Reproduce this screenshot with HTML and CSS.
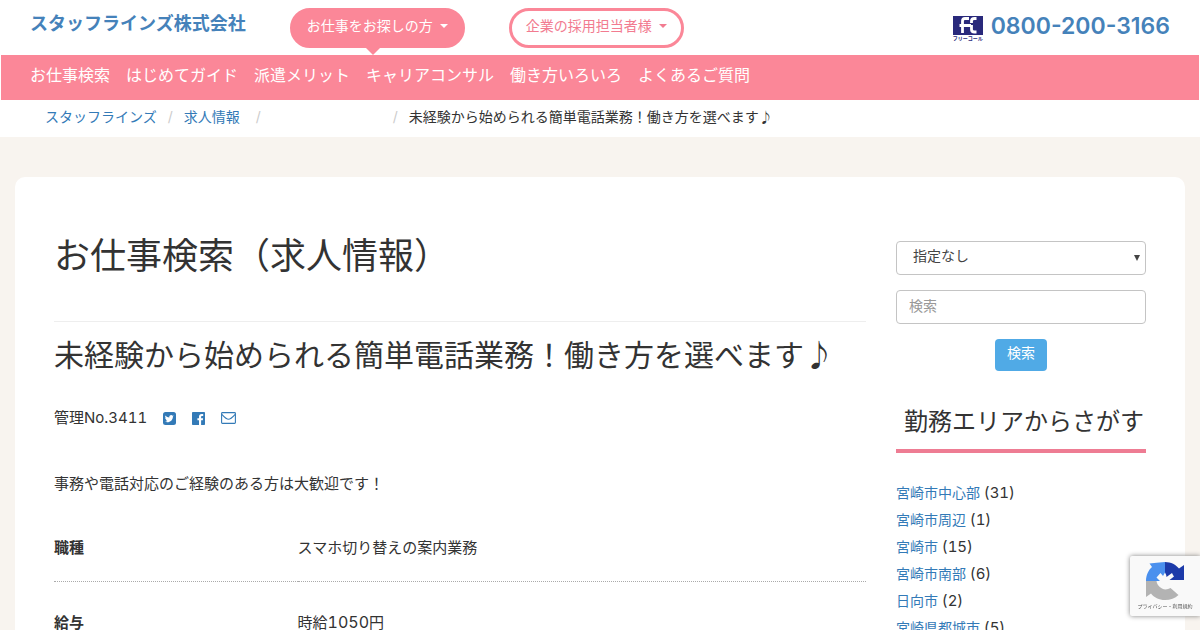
FILE: index.html
```html
<!DOCTYPE html>
<html lang="ja">
<head>
<meta charset="utf-8">
<meta name="viewport" content="width=device-width, initial-scale=1">
<title>お仕事検索（求人情報） | スタッフラインズ株式会社</title>
<link rel="stylesheet" href="styles.css">
</head>
<body>
<header class="site-header">
  <div class="top-bar">
    <a class="brand" href="#">スタッフラインズ株式会社</a>
    <div class="audience">
      <button class="pill pill-active" type="button">お仕事をお探しの方<span class="caret"></span></button>
      <button class="pill" type="button">企業の採用担当者様<span class="caret"></span></button>
    </div>
    <a class="phone" href="tel:0800-200-3166">
      <span class="freecall">
        <svg class="freecall-mark" viewBox="0 0 30 19" aria-hidden="true">
          <rect width="30" height="19" fill="#29297b"/>
          <path d="M16 2.500H12Q9.500 2.500 9.500 5V17M6.500 9.500H18M23.500 2.500H21.500Q18.500 2.500 18.500 5V7M18.500 9V13.500Q18.500 16 21.500 16H23.500" fill="none" stroke="#fff" stroke-width="2.800"/>
        </svg>
        <span class="freecall-text">フリーコール</span>
      </span>
      <span>0800-200-3166</span>
    </a>
  </div>
  <nav class="main-nav">
    <a href="#">お仕事検索</a>
    <a href="#">はじめてガイド</a>
    <a href="#">派遣メリット</a>
    <a href="#">キャリアコンサル</a>
    <a href="#">働き方いろいろ</a>
    <a href="#">よくあるご質問</a>
  </nav>
  <ol class="breadcrumb">
    <li><a href="#">スタッフラインズ</a></li>
    <li><a href="#">求人情報</a></li>
    <li class="crumb-blank"></li>
    <li>未経験から始められる簡単電話業務！働き方を選べます♪</li>
  </ol>
</header>

<div class="card">
  <main class="content">
    <h1>お仕事検索（求人情報）</h1>
    <h2>未経験から始められる簡単電話業務！働き方を選べます♪</h2>
    <div class="meta">
      <span>管理No.3411</span>
      <a href="#" aria-label="Twitter"><svg width="13" height="13" viewBox="0 0 13 13"><rect width="13" height="13" rx="2.500" fill="#337ab7"/><path d="M10.900 3.600l-1 .900c.1 3.400-2.600 5.800-5.500 5.800-.9 0-1.700-.2-2.400-.7 1 0 1.700-.2 2.400-.7-.8-.1-1.400-.6-1.600-1.300h.8c-.9-.3-1.400-.9-1.500-1.800l.8.200c-.8-.6-.9-1.600-.5-2.400 1 1.200 2.300 1.900 3.900 2-.3-1.500.7-2.500 1.900-2.500.6 0 1 .2 1.400.6l1.100-.5-.8 1.100z" fill="#fff"/></svg></a>
      <a href="#" aria-label="Facebook"><svg width="13" height="13" viewBox="0 0 13 13"><rect width="13" height="13" rx=".8" fill="#337ab7"/><path d="M7 13V8.200H5.400V6.300H7V4.800C7 3 8 2.100 9.700 2.100h1.500v1.800h-1c-.9 0-1.100.4-1.100 1.100v1.300h2l-.3 1.900H9.100V13z" fill="#fff"/></svg></a>
      <a href="#" aria-label="メール"><svg width="15" height="12" viewBox="0 0 15 12"><rect x=".6" y=".6" width="13.800" height="10.800" rx=".8" fill="none" stroke="#337ab7" stroke-width="1.100"/><path d="M.8 2.300C3 4.700 5.500 7.300 7.500 7.300S12 4.700 14.200 2.300" fill="none" stroke="#337ab7" stroke-width="1.100"/></svg></a>
    </div>
    <p class="lead">事務や電話対応のご経験のある方は大歓迎です！</p>
    <table class="details">
      <tr><th scope="row">職種</th><td>スマホ切り替えの案内業務</td></tr>
      <tr><th scope="row">給与</th><td>時給<span class="number">1050</span>円</td></tr>
    </table>
  </main>
  <aside class="sidebar">
    <form class="search">
      <div class="select-wrap">
        <select class="field" aria-label="カテゴリー"><option>指定なし</option></select>
      </div>
      <input class="field" type="text" placeholder="検索" aria-label="検索">
      <button class="submit" type="button">検索</button>
    </form>
    <h3>勤務エリアからさがす</h3>
    <ul class="areas">
      <li><a href="#">宮崎市中心部</a> <span>(31)</span></li>
      <li><a href="#">宮崎市周辺</a> <span>(1)</span></li>
      <li><a href="#">宮崎市</a> <span>(15)</span></li>
      <li><a href="#">宮崎市南部</a> <span>(6)</span></li>
      <li><a href="#">日向市</a> <span>(2)</span></li>
      <li><a href="#">宮崎県都城市</a> <span>(5)</span></li>
    </ul>
  </aside>
</div>

<div class="recaptcha">
  <svg width="38" height="38" viewBox="0 0 38 38" aria-hidden="true">
    <path d="M19 0v19H0C0 13 2.500 8 6 5L3.500 1.500Q10 .5 19 0z" fill="#4a90ee"/>
    <path d="M19 0c6 0 11 2.800 14 6.500L38 3v16H19z" fill="#1c3aa9"/>
    <path d="M0 19h19l13.500 14c-3.500 3.300-8 5-13.500 5-6 0-11-2.500-14-6.500L0 35z" fill="#b3b3b3"/>
    <path d="M19 10.500q1.500 2.500 1.500 4.500l5.500-4q1 2 2 3.500l-4.500 3.500H38V28L32 32.500 24.500 26Q20 28.500 16 26.500 11 24 10.500 19H14L10.500 15.500 14.500 11 17 14z" fill="#f9f9f9"/>
  </svg>
  <span class="recaptcha-text">プライバシー・利用規約</span>
</div>
</body>
</html>
```
FILE: styles.css
```css
* { box-sizing: border-box; }

body {
  margin: 0;
  background: #f8f4ef;
  color: #333;
  font: 15px/22px Inter, "Noto Sans CJK JP", sans-serif;
}

a { color: #337ab7; text-decoration: none; }
button, input, select { font: inherit; }

.site-header { background: #fff; }

.top-bar {
  display: flex;
  align-items: flex-start;
  height: 55px;
  padding: 8px 30px 0;
}
.brand {
  margin-right: 44px;
  color: #4582ba;
  font-size: 18px;
  line-height: 32px;
  font-weight: 700;
}
.audience { display: flex; gap: 44px; }
.pill {
  position: relative;
  display: flex;
  align-items: center;
  justify-content: center;
  gap: 7px;
  width: 175px;
  height: 40px;
  padding: 0 0 4px;
  border: 3px solid #fb8798;
  border-radius: 20px;
  background: #fff;
  color: #f27b90;
  font-size: 14px;
}
.pill-active { background: #fb8798; color: #fff; }
.pill-active::after {
  content: "";
  position: absolute;
  top: 37px;
  left: 73px;
  border: 7px solid transparent;
  border-top-color: #fb8798;
  border-bottom: 0;
}
.caret {
  border: 4px solid transparent;
  border-top-color: currentColor;
  border-bottom: 0;
}
.phone {
  display: flex;
  gap: 8px;
  margin-left: auto;
  color: #4582ba;
  font-size: 23px;
  line-height: 36px;
  font-weight: 600;
}
.freecall { width: 30px; padding-top: 8px; }
.freecall-mark { display: block; width: 30px; height: 19px; }
.freecall-text {
  display: block;
  color: #29297b;
  font-size: 5px;
  line-height: 6px;
  font-weight: 700;
  white-space: nowrap;
}

.main-nav {
  display: flex;
  gap: 16px;
  margin: 0 1px;
  padding: 0 29px 5px;
  background: #fb8798;
  font-size: 16px;
  line-height: 40px;
}
.main-nav a { color: #fff; }

.breadcrumb {
  display: flex;
  margin: 0;
  padding: 7px 45px 10px;
  list-style: none;
  font-size: 14px;
  line-height: 20px;
}
.breadcrumb li + li::before {
  content: "/";
  display: inline-block;
  width: 27px;
  color: #ccc;
  text-align: center;
}
.breadcrumb .crumb-blank { width: 142px; padding-left: 5px; }

.card {
  display: flex;
  gap: 30px;
  margin: 40px 15px;
  padding: 0 39px 40px;
  border-radius: 10px;
  background: #fff;
}
.content { flex: 1; min-width: 0; }

h1, h2, h3 { margin: 0; font-weight: 400; }
h1 {
  padding: 59px 0 45px;
  border-bottom: 1px solid #eee;
  font-size: 36px;
  line-height: 40px;
}
h2 { padding-top: 15px; font-size: 30px; line-height: 36px; }

.number { font-size: 16px; }
.meta, .number, .areas { font-variant-numeric: tabular-nums; }
.meta {
  display: flex;
  align-items: center;
  gap: 16px;
  padding-top: 34px;
}
.meta svg { display: block; }
.lead { margin: 44px 0 13px; }

.details { width: 100%; border-collapse: separate; border-spacing: 0; }
.details th, .details td {
  padding: 29px 0 22px;
  border-bottom: 1px dotted #aaa;
  text-align: left;
}
.details th { width: 30%; }

.sidebar { width: 250px; padding-top: 64px; }
.search { display: grid; gap: 15px; justify-items: center; }
.select-wrap { position: relative; width: 100%; }
.select-wrap::after {
  content: "";
  position: absolute;
  top: 14px;
  right: 6px;
  border: 3px solid transparent;
  border-top: 6px solid #444;
  border-bottom: 0;
  pointer-events: none;
}
.field {
  display: block;
  width: 100%;
  height: 34px;
  padding: 0 12px 4px;
  border: 1px solid #c4c4c4;
  border-radius: 4px;
  background: #fff;
  color: #444;
  font-size: 14px;
}
select.field { appearance: none; padding-left: 16px; }
.field::placeholder { color: #999; opacity: 1; }
.submit {
  height: 32px;
  padding: 0 12px 4px;
  border: 0;
  border-radius: 4px;
  background: #50aae6;
  color: #fff;
  font-size: 14px;
}
h3 {
  margin-top: 34px;
  padding: 0 2px 10px 8px;
  border-bottom: 4px solid #ee7c93;
  font-size: 24px;
  line-height: 34px;
  white-space: nowrap;
}
.areas {
  margin: 26px 0 0;
  padding: 0;
  list-style: none;
  font-size: 14px;
  line-height: 27px;
}
.areas span { font-size: 15px; }

.recaptcha {
  position: fixed;
  right: 0;
  bottom: 14px;
  width: 70px;
  height: 60px;
  padding-top: 6px;
  border-radius: 2px 0 0 2px;
  background: #f9f9f9;
  box-shadow: 0 0 5px #808080;
  text-align: center;
}
.recaptcha svg { display: block; margin: 0 auto; }
.recaptcha-text {
  display: block;
  color: #555;
  font-size: 5px;
  line-height: 13px;
  white-space: nowrap;
}
```
